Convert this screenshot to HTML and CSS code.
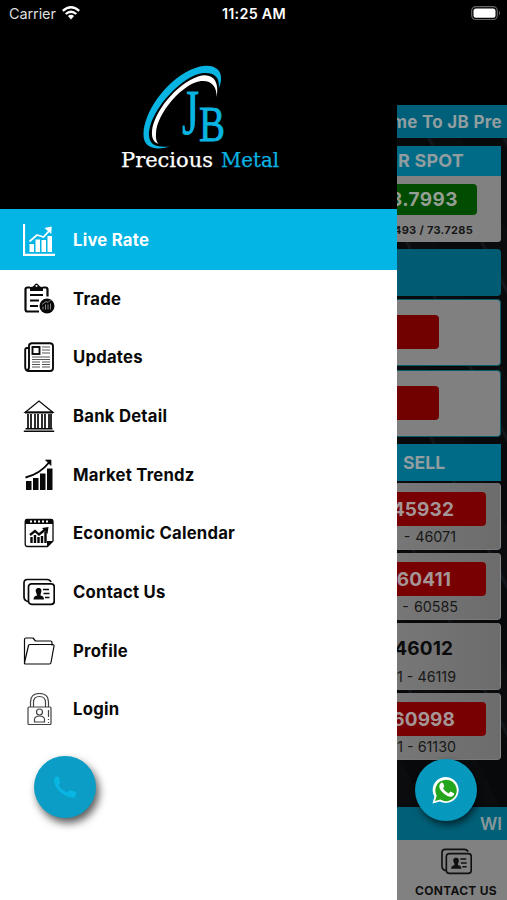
FILE: index.html
```
<!DOCTYPE html>
<html lang="en">
<head>
<meta charset="utf-8">
<meta name="viewport" content="width=device-width">
<title>JB Precious Metal</title>
<link rel="stylesheet" href="styles.css">
</head>
<body>
<svg width="0" height="0" class="defs">
  <symbol id="contact" viewBox="0 0 32 32">
    <g fill="none" stroke="currentColor" stroke-width="1.700"><path d="M5 25.5Q1 24.500 1 21V7Q1 3.500 4.500 3.500H24Q27 3.500 28 6"/><rect x="5.500" y="7.800" width="25.700" height="20.500" rx="3"/></g>
    <path fill="currentColor" d="M15.500 12C18.500 12 19 14.500 18 17Q17.300 18.500 17.500 19.500Q21 20 21 23.500H10.500Q10.500 20 14 19.500Q14 18.500 13.300 17C12 14.500 12.800 12 15.500 12Z"/>
    <path d="M20 13.500h6M20.500 17.500h6M22 21.500h4.500" stroke="currentColor" stroke-width="1.600"/>
  </symbol>
</svg>
<div class="screen">
  <div class="status">
    <span class="carrier">Carrier <svg width="18" height="14" viewBox="0 0 18 14"><g fill="none" stroke="#fff" stroke-width="2.300"><path d="M.8 4.800Q9-2.200 17.200 4.800"/><path d="M3.700 8Q9 3.400 14.300 8"/></g><path fill="#fff" d="M5.900 10Q9 7.500 12.100 10L9 13.400Z"/></svg></span>
    <span class="clock">11:25 AM</span>
    <svg class="battery" width="30" height="15" viewBox="0 0 30 15"><rect x=".7" y=".7" width="25.600" height="12.800" rx="4" fill="none" stroke="#666" stroke-width="1.200"/><rect x="2.500" y="2.500" width="22" height="9.200" rx="2.500" fill="#fff"/><path d="M28 4.600q2 2.500 0 5z" fill="#666"/></svg>
  </div>

  <aside class="drawer">
    <header class="brand">
      <svg width="170" height="112" viewBox="115 62 170 112">
        <path fill="#08b4e2" d="M170 146.500C155 151 143 148 143.500 134C144 112 165 82 190 70C209 61 222 67 221 79Q220.700 85 218.700 88C220 78 215 72 203 73C184 75 152 107 149 132C148 145 156 148 170 146.500Z"/>
        <path fill="#fff" d="M158.500 143.800C153 142 151.500 137 152 131C154 112 176 84 198 76.500C212 72 220 81 216.500 97C217 86 211 80 201 81C183 83 157 113 156 133C155.800 138 156 141 158.500 143.800Z"/>
        <text class="logo-j" x="182" y="134" textLength="17" lengthAdjust="spacingAndGlyphs">J</text>
        <text class="logo-b" x="199" y="141" textLength="26" lengthAdjust="spacingAndGlyphs">B</text>
        <text class="logo-name" x="121" y="166.500" textLength="92" lengthAdjust="spacingAndGlyphs">Precious</text>
        <text class="logo-name logo-blue" x="221" y="166.500" textLength="58" lengthAdjust="spacingAndGlyphs">Metal</text>
      </svg>
    </header>
    <nav class="menu">
      <a class="item active"><svg viewBox="0 0 32 32"><path d="M1 0V30.800H32" fill="none" stroke="currentColor" stroke-width="2.200"/><path d="M6.500 20h4.500v8H6.500zM12.500 15.500h4.500V28h-4.500zM18.500 16h4.500v12h-4.500zM24.500 12H29V28h-4.500z" fill="currentColor"/><path d="M6.500 17.500L14 11L20.500 13L27 6" fill="none" stroke="currentColor" stroke-width="1.800"/><path d="M21.500 4L28.700 2.500L28.300 10Z" fill="currentColor"/></svg><span>Live Rate</span></a>
      <a class="item"><svg viewBox="0 0 32 32"><path d="M7 4.500H4.500Q2.500 4.500 2.500 6.500V26.500Q2.500 28.500 4.500 28.500H16M20 4.500h2.500q2 0 2 2v7" fill="none" stroke="currentColor" stroke-width="2.200"/><path d="M7 8V4Q10 4 11 2.500Q13.500-1.500 16 2.500Q17 4 20 4V8Z" fill="currentColor"/><circle cx="13.500" cy="3" r="1" fill="#fff"/><path d="M7 12h13M7 17.500h9M7 23h8" stroke="currentColor" stroke-width="1.900"/><circle cx="24" cy="23" r="7.500" fill="currentColor"/><path d="M20 26.500v-3m2.500 3v-5m2.500 5v-5m2.500 5v-6M19 21.500l4-3 2 1 3-3" fill="none" stroke="#888" stroke-width="1"/></svg><span>Trade</span></a>
      <a class="item"><svg viewBox="0 0 32 32"><g fill="none" stroke="currentColor" stroke-width="1.900"><path d="M6 7H4Q2.200 7 2.200 9V26Q2.200 30 6 30H27Q30 30 30 27V5Q30 2.200 27 2.200H9Q6 2.200 6 5V26Q6 29 4 29"/><rect x="9.500" y="6" width="7" height="7"/></g><path d="M19 6h8M19 9h8M19 12h8M9 16h18M9 18.500h18M9 21h8m2 0h8M9 23.500h8m2 0h8M9 26h8m2 0h8" stroke="#555" stroke-width="1.100"/></svg><span>Updates</span></a>
      <a class="item"><svg viewBox="0 0 32 32"><path d="M2 12.500L16 1L30 12.500Z" fill="none" stroke="currentColor" stroke-width="1.200"/><path d="M2 11.300h28v2.200H2z" fill="currentColor"/><path d="M5 14v14M8 14v14M12 14v14M15 14v14M19 14v14M22 14v14M26 14v14M28 14v14" stroke="currentColor" stroke-width="1.700"/><path d="M2.500 28.800h27M.8 31.200h30.400" stroke="currentColor" stroke-width="1.400"/></svg><span>Bank Detail</span></a>
      <a class="item"><svg viewBox="0 0 32 32"><path d="M3 22h5.500v9H3zM10 19h5.500v12H10zM17 14.500h5.500V31H17zM24 9.500h5.500V31H24z" fill="currentColor"/><path d="M2.500 18.500Q17 15 26.500 3" fill="none" stroke="currentColor" stroke-width="1.900"/><path d="M22.500 1H28V6.500L25.500 4Z" fill="currentColor" stroke="currentColor" stroke-width=".7"/></svg><span>Market Trendz</span></a>
      <a class="item"><svg viewBox="0 0 32 32"><path d="M4 2.500H28Q30 2.500 30 5V24L24.500 29.500H4.500Q2.200 29.500 2.200 27V5Q2.200 2.500 4 2.500Z" fill="none" stroke="currentColor" stroke-width="1.300"/><path d="M2 7V4Q2 2 4 2H28Q30 2 30 4V7ZM24 30V24H30Z" fill="currentColor"/><path d="M7 4.500h19" stroke="#fff" stroke-width="2" stroke-dasharray="2 2"/><path d="M8.500 26v-6M12 26v-8M15.500 26v-6M19 26v-7M22.500 26V15" stroke="currentColor" stroke-width="2.400"/><path d="M7 18L12 14L16 17.500L23 12" fill="none" stroke="currentColor" stroke-width="2.300"/><path d="M19 11L25.500 10L24.500 17Z" fill="currentColor"/></svg><span>Economic Calendar</span></a>
      <a class="item"><svg><use href="#contact"/></svg><span>Contact Us</span></a>
      <a class="item"><svg viewBox="0 0 32 32"><g fill="none" stroke="currentColor" stroke-width="1.200" stroke-linejoin="round"><path d="M1.500 28V4.500Q1.500 3 3 3H10L12.500 6H27.500Q29 6 29 7.500V10.500"/><path d="M5.500 10.500Q5.800 9.500 7 9.500H29.500Q31.200 9.500 31 11L28 27.500Q27.800 29 26.500 29H2.500Q1.200 29 1.500 27.500Z"/></g></svg><span>Profile</span></a>
      <a class="item"><svg viewBox="0 0 32 32"><g fill="none" stroke="#444" stroke-width="1.200"><path d="M7.500 14V9Q7.500.5 16.500.5T25.500 9v5M10.500 14V9.500Q10.500 3.500 16.500 3.500T22.500 9.500V14"/><rect x="5" y="14" width="23" height="17.500" rx="1"/><circle cx="16.500" cy="19" r="3"/><path d="M11.500 29V26Q12 23 16.500 23T21.500 26v3Z"/><path d="M25.500 17v7m0 2v1m0 2v1"/></g></svg><span>Login</span></a>
    </nav>
    <button class="call" aria-label="Call"><svg width="24" height="24" viewBox="0 0 24 24"><path fill="#09b5e2" d="M2 2.500Q5 .5 6 2.500L7 7Q7 9 5.500 9.500Q7.500 15 14 17.500Q16 15 18 15.500L22 16.500Q24 17 23 20Q22.500 23 20 22.800C10 22 1 13 1 5Q1 3.500 2 2.500Z"/></svg></button>
  </aside>

  <main class="rates">
    <div class="ticker">me To JB Pre</div>
    <section class="spot"><h2>R SPOT</h2><b class="pill green">3.7993</b><small>493 / 73.7285</small></section>
    <div class="bar"></div>
    <div class="quote"><i></i></div>
    <div class="quote"><i></i></div>
    <h2 class="sell">SELL</h2>
    <div class="card"><b class="pill r1">45932</b><span class="s1">- 46071</span></div>
    <div class="card"><b class="pill r2">60411</b><span class="s2">- 60585</span></div>
    <div class="card"><b class="pill plain">46012</b><span class="s3">1 - 46119</span></div>
    <div class="card"><b class="pill r4">60998</b><span class="s3">1 - 61130</span></div>
    <div class="footer-ticker">WI</div>
    <div class="tab"><svg width="31" height="31"><use href="#contact"/></svg><span>CONTACT US</span></div>
    <button class="whatsapp" aria-label="WhatsApp"><svg width="30" height="30" viewBox="0 0 30 30"><path d="M1.500 28.500L3.400 21.500A13 13 0 1 1 8.800 26.600Z" fill="#fff"/><path d="M4 26L5.700 20.700A10.700 10.700 0 1 1 9.300 24.500Z" fill="#24a51b"/><path d="M9.500 8.500Q11 7 12 8L13.300 11Q13.300 12 12 13.300Q14 17 17.500 18.500L19.500 16.500L23 18.200Q23.500 20 21.500 21.300Q18.500 23 14 19.500Q8 15 8.300 11Q8.500 9.500 9.500 8.500Z" fill="#fff"/></svg></button>
  </main>
</div>
</body>
</html>
```
FILE: styles.css
```
* { box-sizing: border-box; }
body { margin: 0; font-family: Inter, "Liberation Sans", sans-serif; background: #000; }
h2 { margin: 0; }
button { border: 0; padding: 0; }
.defs { position: absolute; }
.screen { position: relative; display: grid; grid-template-columns: 397px 110px; width: 507px; height: 900px; overflow: hidden; }
.status { position: absolute; inset: 0 0 auto 0; z-index: 2; height: 27px; padding: 0 6px 0 9px; display: grid; grid-template-columns: 1fr auto 1fr; align-items: center; color: #fff; font-size: 14.5px; }
.carrier { display: flex; align-items: center; gap: 6px; color: #ddd; letter-spacing: -.1px; }
.carrier svg { margin-top: -2px; }
.clock { font-weight: 600; font-size: 14.3px; letter-spacing: .3px; margin-left: -2px; }
.battery { justify-self: end; }

.drawer { background: #fff; display: flex; flex-direction: column; height: 900px; }
.brand { height: 209px; flex: none; background: #000; padding: 62px 0 0 115px; }
.brand svg { display: block; }
.logo-j { font: 63px "Liberation Serif", serif; fill: #08b4e2; stroke: #08b4e2; stroke-width: .8px; }
.logo-b { font: 50px "Liberation Serif", serif; fill: #08b4e2; stroke: #08b4e2; stroke-width: .8px; }
.logo-name { font: 21px "DejaVu Serif", serif; fill: #fff; stroke: #fff; stroke-width: .25px; }
.logo-name.logo-blue { fill: #08b4e2; stroke: #08b4e2; }
.menu { display: flex; flex-direction: column; }
.item { height: 58.67px; display: flex; align-items: center; gap: 18px; padding-left: 23px; color: #090909; font-size: 16.7px; font-weight: 650; letter-spacing: .23px; }
.item svg { width: 32px; height: 32px; flex: none; }
.item.active { height: 60.5px; padding-top: 2px; background: #02b5e4; color: #fff; }
.call { width: 62px; height: 62px; margin: 17px 0 0 34px; border-radius: 50%; background: #0b9dc5; box-shadow: 3px 5px 9px rgba(0,0,0,.65); display: grid; place-items: center; }

.rates { position: relative; height: 900px; padding-top: 105px; display: flex; flex-direction: column; overflow: hidden; background: linear-gradient(#000 0 105px, transparent 105px), repeating-linear-gradient(63deg, #08090a 0 37px, #151a1f 39px, #0a0c0e 42px 67px); }
.ticker, .spot, .bar, .quote, .sell, .card, .footer-ticker, .tab { flex: none; white-space: nowrap; }
.ticker { height: 33px; background: #006079; color: #929da0; font-weight: 650; font-size: 17px; letter-spacing: .3px; display: flex; align-items: center; justify-content: flex-end; padding-right: 5px; }
.spot { width: 104px; height: 96px; margin-top: 8px; background: #818181; border-radius: 0 0 3px 0; display: flex; flex-direction: column; align-items: flex-end; }
.spot h2, .sell { background: #006b86; color: #919da0; font-weight: 650; font-size: 18px; }
.spot h2 { width: 104px; height: 30px; line-height: 30px; text-align: right; padding-right: 37px; letter-spacing: .2px; }
.pill { display: flex; align-items: center; justify-content: flex-end; background: #780002; color: #a49697; font-weight: 650; font-size: 19px; border-radius: 0 4px 4px 0; height: 34px; width: 89px; padding-right: 32px; letter-spacing: .1px; }
.pill.green { margin: 8px 24px 0 0; width: 80px; height: 31px; padding-right: 19px; background: #004d01; color: #959e95; letter-spacing: .4px; }
.spot small { font-size: 11px; font-weight: 700; color: #161616; letter-spacing: .3px; margin: 8px 28px 0 0; }
.bar { width: 104px; height: 47px; margin: 7px 0 3px; background: #005b73; border-radius: 0 4px 4px 0; }
.quote { width: 104px; height: 67px; margin-bottom: 4px; background: #808080; border: 1.5px solid #075c69; border-left: 0; border-radius: 0 4px 4px 0; padding-top: 15px; }
.quote i { display: block; width: 42px; height: 34px; background: #710000; border-radius: 0 4px 4px 0; }
.sell { width: 104px; height: 37px; margin: 3px 0 2px; line-height: 37px; padding-left: 6px; font-size: 17.7px; }
.card { width: 104px; height: 67px; margin-bottom: 3px; background: linear-gradient(90deg,#777,#6c6c6c); border-right: 1px solid #898989; border-bottom: 1px solid #7a7a7a; border-radius: 0 4px 4px 0; padding-top: 9px; display: flex; flex-direction: column; }
.card span { text-align: right; font-size: 14.3px; line-height: 22px; color: #181818; }
.card .s1, .card .s3 { padding-right: 44px; }
.card .s2 { padding-right: 42px; }
.s1, .s2 { word-spacing: 1px; }
.r2 { padding-right: 35px; }
.r4 { padding-right: 31px; }
.pill.plain { background: none; color: #0b0b0b; padding-right: 33px; height: 33px; margin-bottom: 1px; }
.footer-ticker { height: 33px; margin-top: 44px; background: #006078; color: #89979b; font-size: 17px; font-weight: 600; display: flex; align-items: center; justify-content: flex-end; padding-right: 5px; }
.tab { height: 60px; background: #818181; color: #101010; display: flex; flex-direction: column; align-items: center; padding: 6px 0 0 8px; font-size: 12px; font-weight: 700; letter-spacing: .3px; }
.tab span { margin-top: 6px; }
.whatsapp { position: absolute; left: 18px; top: 759px; width: 62px; height: 62px; border-radius: 50%; background: #0798be; box-shadow: 2px 4px 7px rgba(0,0,0,.6); display: grid; place-items: center; }
```
